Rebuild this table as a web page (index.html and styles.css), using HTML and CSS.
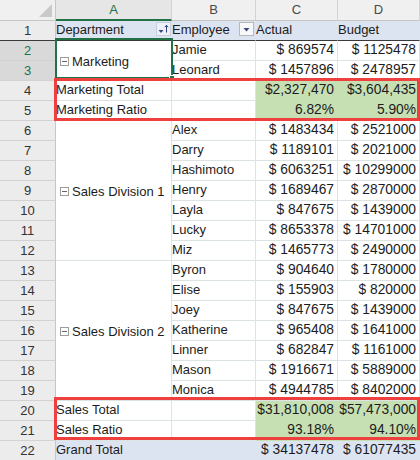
FILE: index.html
```html
<!DOCTYPE html>
<html>
<head>
<meta charset="utf-8">
<link rel="stylesheet" href="styles.css">
</head>
<body>
<div class="sheet">
<table class="grid">
<colgroup><col class="c0"><col class="c1"><col class="c2"><col class="c3"><col class="c4"></colgroup>
<thead>
<tr class="colhdr">
<th class="corner"><span class="tri"></span></th>
<th class="sel">A</th><th>B</th><th>C</th><th>D</th>
</tr>
</thead>
<tbody>
<tr class="phdr">
<th class="rn">1</th>
<td><div class="hd"><span>Department</span><svg class="fbtn" width="15" height="14" viewBox="0 0 15 14"><rect x="0.5" y="0.5" width="14" height="13" fill="#eef1f7" stroke="#c8cede"/><polygon points="2.5,8 7.5,8 5,11" fill="#3b4a7e"/><line x1="10.5" y1="3.5" x2="10.5" y2="10.5" stroke="#33407a" stroke-width="1"/><polyline points="8.8,5.2 10.5,3.3 12.2,5.2" fill="none" stroke="#33407a" stroke-width="1"/></svg></div></td>
<td><div class="hd"><span>Employee</span><svg class="fbtn fb2" width="15" height="14" viewBox="0 0 15 14"><rect x="0.5" y="0.5" width="14" height="13" fill="#f8f8f8" stroke="#b9b9b9"/><polygon points="4.5,6 10.5,6 7.5,9.5" fill="#3b4a7e"/></svg></div></td>
<td>Actual</td>
<td>Budget</td>
</tr>
<tr><th class="rn on">2</th><td class="grp" rowspan="2"><div class="g"><span class="tog"></span>Marketing</div></td><td>Jamie</td><td class="n">$ 869574</td><td class="n">$ 1125478</td></tr>
<tr><th class="rn on">3</th><td>Leonard</td><td class="n">$ 1457896</td><td class="n">$ 2478957</td></tr>
<tr><th class="rn">4</th><td>Marketing Total</td><td></td><td class="n hl">$2,327,470</td><td class="n hl">$3,604,435</td></tr>
<tr><th class="rn">5</th><td>Marketing Ratio</td><td></td><td class="n hl">6.82%</td><td class="n hl">5.90%</td></tr>
<tr><th class="rn">6</th><td class="grp" rowspan="7"><div class="g"><span class="tog"></span>Sales Division 1</div></td><td>Alex</td><td class="n">$ 1483434</td><td class="n">$ 2521000</td></tr>
<tr><th class="rn">7</th><td>Darry</td><td class="n">$ 1189101</td><td class="n">$ 2021000</td></tr>
<tr><th class="rn">8</th><td>Hashimoto</td><td class="n">$ 6063251</td><td class="n">$ 10299000</td></tr>
<tr><th class="rn">9</th><td>Henry</td><td class="n">$ 1689467</td><td class="n">$ 2870000</td></tr>
<tr><th class="rn">10</th><td>Layla</td><td class="n">$ 847675</td><td class="n">$ 1439000</td></tr>
<tr><th class="rn">11</th><td>Lucky</td><td class="n">$ 8653378</td><td class="n">$ 14701000</td></tr>
<tr><th class="rn">12</th><td>Miz</td><td class="n">$ 1465773</td><td class="n">$ 2490000</td></tr>
<tr><th class="rn">13</th><td class="grp" rowspan="7"><div class="g"><span class="tog"></span>Sales Division 2</div></td><td>Byron</td><td class="n">$ 904640</td><td class="n">$ 1780000</td></tr>
<tr><th class="rn">14</th><td>Elise</td><td class="n">$ 155903</td><td class="n">$ 820000</td></tr>
<tr><th class="rn">15</th><td>Joey</td><td class="n">$ 847675</td><td class="n">$ 1439000</td></tr>
<tr><th class="rn">16</th><td>Katherine</td><td class="n">$ 965408</td><td class="n">$ 1641000</td></tr>
<tr><th class="rn">17</th><td>Linner</td><td class="n">$ 682847</td><td class="n">$ 1161000</td></tr>
<tr><th class="rn">18</th><td>Mason</td><td class="n">$ 1916671</td><td class="n">$ 5889000</td></tr>
<tr><th class="rn">19</th><td>Monica</td><td class="n">$ 4944785</td><td class="n">$ 8402000</td></tr>
<tr><th class="rn">20</th><td>Sales Total</td><td></td><td class="n hl">$31,810,008</td><td class="n hl">$57,473,000</td></tr>
<tr><th class="rn">21</th><td>Sales Ratio</td><td></td><td class="n hl">93.18%</td><td class="n hl">94.10%</td></tr>
<tr class="gt"><th class="rn">22</th><td>Grand Total</td><td></td><td class="n">$ 34137478</td><td class="n">$ 61077435</td></tr>
</tbody>
</table>
<div class="selbox"></div>
<div class="handle"></div>
<div class="mark mark-mkt"></div>
<div class="mark mark-sales"></div>
</div>
</body>
</html>
```
FILE: styles.css
```css
body {
  margin: 0;
  background: #fff;
  font-family: "Liberation Sans", Arial, sans-serif;
  font-size: 13px;
  color: #1c1c1c;
  overflow: hidden;
}
.sheet {
  position: relative;
  width: 420px;
  height: 460px;
  overflow: hidden;
}
.grid {
  border-collapse: separate;
  border-spacing: 0;
  table-layout: fixed;
  width: 420px;
}
.c0 { width: 56px; }
.c1 { width: 116px; }
.c2 { width: 84px; }
.c3 { width: 82px; }
.c4 { width: 82px; }
.grid td, .grid th {
  padding: 0;
  white-space: nowrap;
  overflow: hidden;
  font-weight: normal;
}
.colhdr th {
  height: 19px;
  line-height: 18px;
  background: #f0f0f0;
  border-right: 1px solid #d4d4d4;
  border-bottom: 1px solid #c6c6c6;
  color: #4a4a4a;
  text-align: center;
  font-size: 13px;
}
.colhdr th.sel {
  background: #e6e6e6;
  color: #217346;
  border-bottom: 2px solid #217346;
  line-height: 17px;
}
.colhdr th.corner {
  position: relative;
  border-right: 1px solid #c6c6c6;
}
.tri {
  position: absolute;
  right: 3px;
  bottom: 3px;
  width: 0;
  height: 0;
  border-left: 13px solid transparent;
  border-bottom: 13px solid #c9c9c9;
}
tbody tr { height: 20px; }
tbody td {
  padding-top: 2px;
  padding-left: 2px;
  line-height: 17px;
  border-right: 1px solid #dbe3e3;
  border-bottom: 1px solid #dbe3e3;
  vertical-align: top;
}
th.rn {
  padding-top: 1px;
  line-height: 18px;
  background: #ececec;
  color: #333;
  text-align: center;
  border-right: 1px solid #c6c6c6;
  border-bottom: 1px solid #d2d2d2;
  font-size: 13px;
}
th.rn.on {
  background: #d9d9d9;
  color: #217346;
}
td.n {
  text-align: right;
  padding-left: 0;
  padding-right: 3px;
  font-size: 13.8px;
}
td.hl {
  background: #c6e0b4;
  border-right-color: #c6e0b4;
  border-bottom-color: #c6e0b4;
}
td.grp {
  vertical-align: middle;
  padding-left: 4px;
  padding-top: 0;
}
.g {
  display: flex;
  align-items: center;
  gap: 3px;
  padding-top: 1px;
}
.tog {
  position: relative;
  width: 9px;
  height: 9px;
  box-sizing: border-box;
  border: 1px solid #9c9c9c;
  background: #fff;
  flex: none;
}
.tog::after {
  content: "";
  position: absolute;
  left: 1px;
  right: 1px;
  top: 3px;
  height: 1px;
  background: #666;
}
.phdr td, .phdr th.rn {
  border-bottom: 1px solid #3a3a3a;
}
.phdr td {
  background: #dce4f1;
  border-right-color: #dce4f1;
}
.hd {
  display: flex;
  justify-content: space-between;
  align-items: center;
  height: 17px;
}
.fbtn {
  display: block;
  margin-top: -2px;
  margin-right: 0;
  flex: none;
}
.fbtn.fb2 { margin-right: 1px; }
.gt td {
  background: #dce4f1;
  border-right-color: #dce4f1;
  border-bottom-color: #dce4f1;
}
.selbox {
  position: absolute;
  left: 55px;
  top: 38px;
  width: 118px;
  height: 41px;
  box-sizing: border-box;
  border: 2px solid #217346;
}
.handle {
  position: absolute;
  left: 169px;
  top: 75px;
  width: 6px;
  height: 6px;
  box-sizing: border-box;
  background: #217346;
  border: 1px solid #fff;
}
.mark {
  position: absolute;
  left: 54px;
  width: 366px;
  box-sizing: border-box;
  border: 3px solid #ef4040;
}
.mark-mkt {
  top: 78px;
  height: 43px;
}
.mark-sales {
  top: 397px;
  height: 43px;
}
```
